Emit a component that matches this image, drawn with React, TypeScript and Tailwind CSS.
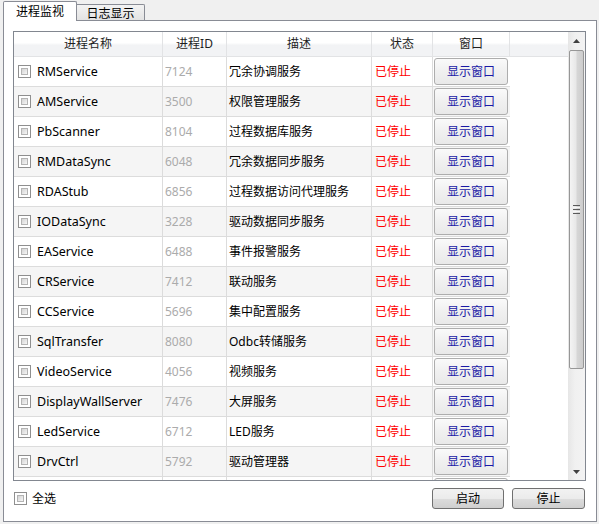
import React from "react";

const rows: [string, string, string][] = [
  ["RMService", "7124", "冗余协调服务"],
  ["AMService", "3500", "权限管理服务"],
  ["PbScanner", "8104", "过程数据库服务"],
  ["RMDataSync", "6048", "冗余数据同步服务"],
  ["RDAStub", "6856", "过程数据访问代理服务"],
  ["IODataSync", "3228", "驱动数据同步服务"],
  ["EAService", "6488", "事件报警服务"],
  ["CRService", "7412", "联动服务"],
  ["CCService", "5696", "集中配置服务"],
  ["SqlTransfer", "8080", "Odbc转储服务"],
  ["VideoService", "4056", "视频服务"],
  ["DisplayWallServer", "7476", "大屏服务"],
  ["LedService", "6712", "LED服务"],
  ["DrvCtrl", "5792", "驱动管理器"],
  ["", "", ""],
];

function CheckBox() {
  return (
    <div className="w-[13px] h-[13px] shrink-0 border border-[#8f8f8f] bg-white p-[2px]">
      <div className="w-full h-full border border-[#b4b4b4] bg-[linear-gradient(135deg,#d4d4d4,#f6f6f6)]" />
    </div>
  );
}

export default function App() {
  return (
    <div className="w-[599px] h-[524px] bg-[#f0f0f0] pl-[3px] pt-[1px] font-['Noto_Sans','Noto_Sans_CJK_SC',sans-serif] text-[12px] text-black leading-[16px] overflow-hidden">
      {/* tabs */}
      <div className="flex items-end h-[19px]">
        <div className="relative z-10 -mb-px h-[20px] w-[74px] bg-white border border-b-0 border-[#898c95] flex items-center justify-center rounded-t-[2px]">
          <span className="mt-[1px]">进程监视</span>
        </div>
        <div className="h-[16px] w-[68px] border border-b-0 border-l-0 border-[#898c95] bg-[linear-gradient(to_bottom,#f3f3f3,#e3e3e3)] flex items-center justify-center rounded-tr-[2px]">
          <span className="mt-[2px] leading-[14px]">日志显示</span>
        </div>
      </div>
      {/* panel */}
      <div className="relative w-[594px] h-[502px] border border-[#898c95] bg-white pl-[9px] pt-[10px]">
        <div className="w-[573px] h-[450px] border border-[#828790] flex">
          <div className="w-[554px] h-full flex flex-col overflow-hidden">
            {/* header */}
            <div className="h-[25px] shrink-0 flex border-b border-[#e2e3e5] bg-[linear-gradient(to_bottom,#ffffff_0%,#ffffff_45%,#f2f3f5_55%,#f2f3f5_100%)] text-[#1e1e1e]">
              <div className="w-[149px] border-r border-[#e2e3e5] flex items-center justify-center">进程名称</div>
              <div className="w-[64px] border-r border-[#e2e3e5] flex items-center justify-center">进程ID</div>
              <div className="w-[145px] border-r border-[#e2e3e5] flex items-center justify-center">描述</div>
              <div className="w-[61px] border-r border-[#e2e3e5] flex items-center justify-center">状态</div>
              <div className="w-[77px] border-r border-[#e2e3e5] flex items-center justify-center">窗口</div>
              <div className="w-[58px]" />
            </div>
            {rows.map(([name, id, desc], i) => {
              const filled = name !== "";
              return (
                <div key={i} className="h-[30px] shrink-0 flex">
                  <div
                    className={`w-[496px] flex border-b border-[#dcdcdc] ${
                      i % 2 === 1 ? "bg-[#f5f5f5]" : "bg-white"
                    }`}
                  >
                    <div className="w-[149px] border-r border-[#dcdcdc] flex items-center pl-[4px] gap-[6px]">
                      {filled && <CheckBox />}
                      {filled && <span className="text-[12.5px] pt-[1px]">{name}</span>}
                    </div>
                    <div className="w-[64px] border-r border-[#dcdcdc] flex items-center pl-[2px] pt-[1px] text-[#ababab]">{id}</div>
                    <div className="w-[145px] border-r border-[#dcdcdc] flex items-center pl-[2px]">{desc}</div>
                    <div className="w-[61px] border-r border-[#dcdcdc] flex items-center pl-[3px] text-[#ff0000]">
                      {filled ? "已停止" : ""}
                    </div>
                    <div className="w-[77px] pl-[1px] pt-[1px]">
                      <div className="w-[74px] h-[27px] border border-[#adadad] rounded-[3px] bg-[linear-gradient(to_bottom,#fafafa,#f0f0f0_50%,#e9e9e9)] flex items-center justify-center text-[#1a1aa6]">
                        {filled ? "显示窗口" : ""}
                      </div>
                    </div>
                  </div>
                  <div className="w-[58px] bg-white" />
                </div>
              );
            })}
          </div>
          {/* scrollbar */}
          <div className="w-[17px] h-full flex flex-col bg-[linear-gradient(to_right,#e6e6e6,#f0f0f0_40%,#f3f3f3)]">
            <div className="h-[17px] shrink-0 flex items-center justify-center">
              <svg width="7" height="4" viewBox="0 0 7 4">
                <polygon points="3.5,0 7,4 0,4" fill="#404040" />
              </svg>
            </div>
            <div className="mx-[1px] mt-[1px] h-[319px] border border-[#979797] rounded-[2px] bg-[linear-gradient(to_right,#f4f4f4,#e8e8e8_45%,#d6d6d6_55%,#cdcdcd)] flex flex-col items-center justify-center gap-[1px]">
              <div className="w-[7px] h-[1px] bg-[#5a5a5a]" />
              <div className="w-[7px] h-[1px] bg-[#f6f6f6]" />
              <div className="w-[7px] h-[1px] bg-[#5a5a5a]" />
              <div className="w-[7px] h-[1px] bg-[#f6f6f6]" />
              <div className="w-[7px] h-[1px] bg-[#5a5a5a]" />
            </div>
            <div className="flex-1" />
            <div className="h-[17px] shrink-0 flex items-center justify-center">
              <svg width="7" height="4" viewBox="0 0 7 4">
                <polygon points="0,0 7,0 3.5,4" fill="#404040" />
              </svg>
            </div>
          </div>
        </div>
        {/* bottom */}
        <div className="w-[573px] mt-[7px] h-[21px] flex items-center">
          <div className="ml-[1px] flex items-center gap-[5px]">
            <CheckBox />
            <span>全选</span>
          </div>
          <div className="flex-1" />
          <div className="w-[72px] h-[21px] border border-[#707070] rounded-[3px] bg-[linear-gradient(to_bottom,#f2f2f2,#ebebeb_50%,#dddddd_50%,#cfcfcf)] flex items-center justify-center">
            <span className="leading-[15px]">启动</span>
          </div>
          <div className="ml-[8px] mr-[1px] w-[73px] h-[21px] border border-[#707070] rounded-[3px] bg-[linear-gradient(to_bottom,#f2f2f2,#ebebeb_50%,#dddddd_50%,#cfcfcf)] flex items-center justify-center">
            <span className="leading-[15px]">停止</span>
          </div>
        </div>
      </div>
    </div>
  );
}
